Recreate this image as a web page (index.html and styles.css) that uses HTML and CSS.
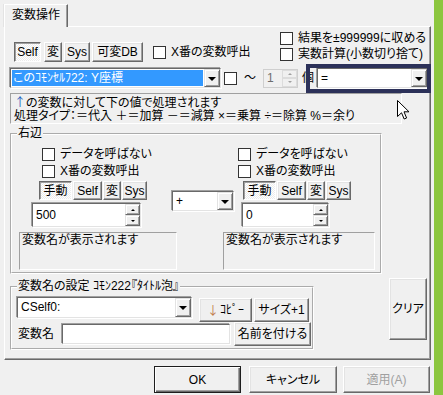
FILE: index.html
```html
<!DOCTYPE html>
<html lang="ja">
<head>
<meta charset="utf-8">
<title>変数操作</title>
<link rel="stylesheet" href="styles.css">
</head>
<body>
<div class="screen">
  <div class="dialog">
    <div class="tabs"><div class="tab">変数操作</div></div>
    <div class="panel">
      <div class="row1">
        <div class="srcbar">
          <button class="btn on b-self">Self</button>
          <button class="btn b-var">変</button>
          <button class="btn b-sys">Sys</button>
          <button class="btn b-db">可変DB</button>
          <label class="chk xcall"><span class="box"></span>X番の変数呼出</label>
        </div>
        <div class="opts">
          <label class="chk"><span class="box"></span>結果を±999999に収める</label>
          <label class="chk"><span class="box"></span>実数計算(小数切り捨て)</label>
        </div>
      </div>

      <div class="row2">
        <div class="combo combo-target"><div class="combo-field selected">このｺﾓﾝｾﾙﾌ22: Y座標</div><span class="drop"></span></div>
        <span class="box range-chk"></span>
        <span class="tilde">～</span>
        <div class="spin spin-count disabled"><span class="spin-val">1</span><span class="spin-btns"><span class="sb up"></span><span class="sb down"></span></span></div>
        <span class="unit">個</span>
        <div class="combo combo-op"><div class="combo-field">=</div><span class="drop"></span></div>
      </div>

      <div class="info">
        <p><span class="arrow up-arrow">↑</span>の変数に対して下の値で処理されます</p>
        <p>処理タイプ：＝代入 ＋＝加算 －＝減算 ×＝乗算 ÷＝除算 %＝余り</p>
      </div>

      <fieldset class="group rhs">
        <legend>右辺</legend>
        <div class="rhs-checks">
          <div class="chk-col chk-col-l">
            <label class="chk"><span class="box"></span>データを呼ばない</label>
            <label class="chk"><span class="box"></span>X番の変数呼出</label>
          </div>
          <div class="chk-col">
            <label class="chk"><span class="box"></span>データを呼ばない</label>
            <label class="chk"><span class="box"></span>X番の変数呼出</label>
          </div>
        </div>
        <div class="rhs-inputs">
          <div class="operand operand-l">
            <div class="src-btns">
              <button class="btn on s-manual">手動</button>
              <button class="btn s-self">Self</button>
              <button class="btn s-var">変</button>
              <button class="btn s-sys">Sys</button>
            </div>
            <div class="spin spin-l"><span class="spin-val">500</span><span class="spin-btns"><span class="sb up"></span><span class="sb down"></span></span></div>
          </div>
          <div class="combo combo-calc"><div class="combo-field">+</div><span class="drop"></span></div>
          <div class="operand operand-r">
            <div class="src-btns">
              <button class="btn on s-manual">手動</button>
              <button class="btn s-self">Self</button>
              <button class="btn s-var">変</button>
              <button class="btn s-sys">Sys</button>
            </div>
            <div class="spin spin-r"><span class="spin-val">0</span><span class="spin-btns"><span class="sb up"></span><span class="sb down"></span></span></div>
          </div>
        </div>
        <div class="rhs-names">
          <div class="namebox namebox-l">変数名が表示されます</div>
          <div class="namebox namebox-r">変数名が表示されます</div>
        </div>
      </fieldset>

      <div class="lower">
        <fieldset class="group naming">
          <legend>変数名の設定 ｺﾓﾝ222『ﾀｲﾄﾙ泡』</legend>
          <div class="naming-row1">
            <div class="combo combo-cself"><div class="combo-field">CSelf0:</div><span class="drop"></span></div>
            <button class="btn b-copy"><span class="arrow down-arrow">↓</span>ｺﾋﾟｰ</button>
            <button class="btn b-size">サイズ+1</button>
          </div>
          <div class="naming-row2">
            <span class="name-label">変数名</span>
            <div class="name-input"></div>
            <button class="btn b-name">名前を付ける</button>
          </div>
        </fieldset>
        <button class="btn b-clear">クリア</button>
      </div>
    </div>

    <div class="footer">
      <button class="btn default b-ok">OK</button>
      <button class="btn b-cancel">キャンセル</button>
      <button class="btn b-apply" disabled>適用(A)</button>
    </div>
  </div>
  <div class="green"></div>

  <div class="highlight"></div>
  <svg class="cursor" width="13" height="20" viewBox="0 0 13 20"><path d="M0.5 0.5 L0.5 16.5 L4.5 12.8 L7.2 19 L9.6 18 L7 11.8 L12 11.8 Z" fill="#fff" stroke="#000" stroke-width="1"/></svg>
</div>
</body>
</html>
```

FILE: styles.css
```css
* { box-sizing: border-box; }
html, body { margin: 0; padding: 0; }
body {
  width: 443px;
  height: 395px;
  overflow: hidden;
  background: #f0f0f0;
  font-family: "Liberation Sans", "Noto Sans CJK JP", sans-serif;
  font-size: 12px;
  color: #000;
  font-feature-settings: "palt";
}
p { margin: 0; }

.screen { position: relative; display: flex; width: 443px; height: 395px; }
.dialog { width: 434px; flex: none; }
.green { flex: 1; background: #8cc63f; }

/* tabs */
.tabs { height: 26px; display: flex; align-items: flex-end; }
.tab {
  position: relative;
  z-index: 1;
  margin-left: 4px;
  margin-bottom: -1px;
  width: 64px;
  height: 23px;
  background: #f0f0f0;
  border-left: 1px solid #fff;
  border-top: 1px solid #fff;
  border-right: 1px solid #696969;
  box-shadow: inset -1px 0 #a0a0a0, -1px 0 #e3e3e3;
  display: flex;
  align-items: center;
  justify-content: center;
  line-height: 13px;
  padding-bottom: 2px;
}
.panel {
  margin-left: 4px;
  width: 427px;
  height: 334px;
  border: 1px solid;
  border-color: #fff #696969 #696969 #fff;
  box-shadow: inset -1px -1px #a0a0a0;
}

/* generic controls */
.btn {
  display: flex;
  align-items: center;
  justify-content: center;
  flex: none;
  height: 20px;
  margin: 0;
  padding: 0;
  font: inherit;
  line-height: 1;
  color: #000;
  background: #f0f0f0;
  border: 1px solid;
  border-color: #fff #696969 #696969 #fff;
  box-shadow: inset -1px -1px #a0a0a0, inset 1px 1px #e3e3e3;
  white-space: nowrap;
}
.btn.on {
  border-color: #696969 #fff #fff #696969;
  box-shadow: inset 1px 1px #a0a0a0;
  background: repeating-conic-gradient(#fff 0 25%, #ececec 0 50%) 0 0 / 2px 2px;
}
.btn:disabled { color: #a0a0a0; }
.btn.default {
  border: 1px solid #1e1e1e;
  box-shadow: inset 1px 1px #fff, inset -1px -1px #696969, inset -2px -2px #a0a0a0;
}

.arrow { font-family: "Noto Sans CJK JP", sans-serif; }
.up-arrow { color: #1f5fbf; }
.down-arrow { color: #c07a4a; margin-right: 1px; }

.chk {
  display: flex;
  align-items: center;
  gap: 5px;
  white-space: nowrap;
  line-height: 13px;
  height: 17px;
}
.box {
  display: block;
  flex: none;
  width: 13px;
  height: 13px;
  background: #fff;
  border: 1px solid #333;
}

.combo {
  display: flex;
  flex: none;
  height: 20px;
  background: #fff;
  border: 1px solid;
  border-color: #696969 #e3e3e3 #e3e3e3 #696969;
  box-shadow: -1px -1px #a0a0a0, 1px 1px #fff;
}
.combo-field {
  flex: 1;
  display: flex;
  align-items: center;
  padding-left: 3px;
  line-height: 13px;
  white-space: nowrap;
  overflow: hidden;
}
.combo-field.selected {
  margin: 1px;
  padding-left: 1px;
  background: #3399ff;
  color: #fff;
}
.drop {
  position: relative;
  flex: none;
  width: 16px;
  background: #f0f0f0;
  border: 1px solid;
  border-color: #e3e3e3 #696969 #696969 #e3e3e3;
  box-shadow: inset 1px 1px #fff, inset -1px -1px #a0a0a0;
  display: flex;
  align-items: center;
  justify-content: center;
}
.drop::after {
  content: "";
  border-left: 4px solid transparent;
  border-right: 4px solid transparent;
  border-top: 4px solid #000;
  margin-top: 1px;
}

.spin {
  display: flex;
  flex: none;
  background: #fff;
  border: 1px solid;
  border-color: #696969 #e3e3e3 #e3e3e3 #696969;
  box-shadow: -1px -1px #a0a0a0, 1px 1px #fff;
}
.spin-val {
  flex: 1;
  display: flex;
  align-items: center;
  padding-left: 3px;
  line-height: 13px;
}
.spin-btns { display: flex; flex-direction: column; width: 15px; flex: none; }
.sb {
  flex: 1;
  display: flex;
  align-items: center;
  justify-content: center;
  background: #f0f0f0;
  border: 1px solid;
  border-color: #e3e3e3 #696969 #696969 #e3e3e3;
  box-shadow: inset 1px 1px #fff, inset -1px -1px #a0a0a0;
}
.sb.up::after {
  content: "";
  border-left: 2px solid transparent;
  border-right: 2px solid transparent;
  border-bottom: 2px solid #000;
}
.sb.down::after {
  content: "";
  border-left: 2px solid transparent;
  border-right: 2px solid transparent;
  border-top: 2px solid #000;
}

.group {
  margin: 0;
  padding: 0;
  min-width: 0;
  border: 2px groove #fff;
}
.group legend {
  margin-left: 5px;
  padding: 0 1px;
  line-height: 13px;
  white-space: nowrap;
}

/* row 1 */
.row1 { display: flex; height: 35px; }
.srcbar {
  display: flex;
  align-items: center;
  align-self: flex-start;
  width: 266px;
  height: 20px;
  margin: 15px 0 0 9px;
}
.b-self { width: 27px; }
.b-var { width: 18px; margin-left: 3px; }
.b-sys { width: 26px; margin-left: 2px; }
.b-db { width: 51px; margin-left: 2px; }
.xcall { margin-left: 10px; }
.opts { display: flex; flex-direction: column; margin-top: 3px; }

/* row 2 */
.row2 {
  display: flex;
  align-items: center;
  height: 20px;
  margin: 6px 0 0 5px;
}
.combo-target { width: 211px; }
.range-chk { margin-left: 3px; }
.tilde { margin-left: 7px; line-height: 13px; }
.spin-count {
  width: 35px;
  height: 19px;
  margin-left: 7px;
}
.spin.disabled {
  background: #f0f0f0;
  border-color: #cfcfcf;
  box-shadow: none;
  color: #6d6d6d;
}
.spin.disabled .sb { border-color: #dcdcdc; box-shadow: none; }
.spin.disabled .sb.up::after { border-bottom-color: #a0a0a0; }
.spin.disabled .sb.down::after { border-top-color: #a0a0a0; }
.unit { margin-left: 4px; line-height: 13px; }
.combo-op { width: 111px; margin-left: 3px; }

/* info */
.info {
  width: 392px;
  height: 31px;
  margin: 5px 0 0 5px;
  padding: 1px 3px;
  border: 1px solid;
  border-color: #a0a0a0 #fff #fff #a0a0a0;
  line-height: 13px;
  white-space: nowrap;
}

/* right-hand side group */
.rhs {
  width: 372px;
  height: 147px;
  margin: 3px 0 0 5px;
}
.rhs-checks { display: flex; margin-top: 6px; padding-left: 30px; }
.chk-col { display: flex; flex-direction: column; }
.chk-col-l { width: 196px; }
.rhs-inputs { display: flex; align-items: flex-start; margin-top: 1px; height: 46px; }
.operand { display: flex; flex-direction: column; }
.operand-l { margin-left: 20px; }
.operand-l .src-btns { margin-left: 7px; }
.operand-r { margin-left: 8px; }
.operand-r .src-btns { margin-left: 1px; }
.src-btns { display: flex; gap: 1px; height: 19px; }
.src-btns .btn { height: 19px; }
.s-manual { width: 33px; }
.s-self { width: 29px; }
.s-var { width: 18px; }
.s-sys { width: 25px; }
.spin-l { width: 109px; height: 24px; margin-top: 3px; }
.spin-r { width: 87px; height: 24px; margin-top: 3px; }
.combo-calc { width: 62px; margin: 10px 0 0 25px; }
.rhs-names { display: flex; margin-top: 5px; }
.namebox {
  height: 38px;
  padding: 1px 2px;
  line-height: 13px;
  border: 1px solid;
  border-color: #a0a0a0 #fff #fff #a0a0a0;
}
.namebox-l { width: 158px; margin-left: 7px; }
.namebox-r { width: 152px; margin-left: 46px; }

/* lower */
.lower { display: flex; align-items: flex-start; margin: 4px 0 0 5px; }
.naming { width: 304px; height: 70px; margin-top: 2px; }
.naming-row1 { display: flex; align-items: flex-start; margin-top: 4px; height: 25px; }
.combo-cself { width: 175px; height: 21px; margin-left: 5px; }
.b-copy { width: 53px; height: 24px; margin: 1px 0 0 7px; }
.b-size { width: 55px; height: 24px; margin: 1px 0 0 2px; }
.naming-row2 { display: flex; align-items: center; height: 24px; }
.name-label { margin-left: 6px; width: 44px; line-height: 13px; }
.name-input {
  width: 168px;
  height: 20px;
  background: #fff;
  border: 1px solid;
  border-color: #696969 #e3e3e3 #e3e3e3 #696969;
  box-shadow: -1px -1px #a0a0a0, 1px 1px #fff;
}
.b-name { width: 77px; height: 24px; margin-left: 4px; }
.b-clear { width: 38px; height: 62px; margin-left: 75px; }

/* footer */
.footer { display: flex; margin-top: 6px; }
.footer .btn { height: 27px; }
.b-ok { width: 87px; margin-left: 154px; }
.b-cancel { width: 88px; margin-left: 8px; }
.b-apply { width: 87px; margin-left: 6px; }

/* overlays */
.highlight {
  position: absolute;
  left: 306px;
  top: 64px;
  width: 125px;
  height: 29px;
  border: 4px solid #2c3159;
}
.cursor { position: absolute; left: 397px; top: 100px; }
```
